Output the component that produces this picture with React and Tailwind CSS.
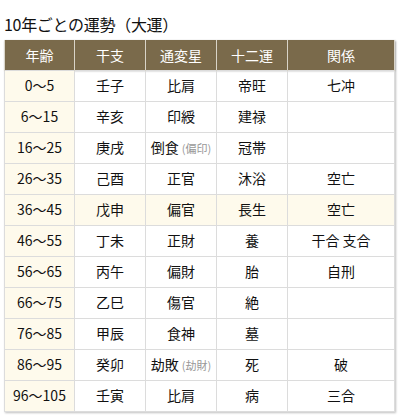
const rows = [
  { age: "0〜5", kanshi: "壬子", star: "比肩", twelve: "帝旺", rel: "七冲" },
  { age: "6〜15", kanshi: "辛亥", star: "印綬", twelve: "建禄", rel: "" },
  { age: "16〜25", kanshi: "庚戌", star: "倒食", sub: "偏印", twelve: "冠帯", rel: "" },
  { age: "26〜35", kanshi: "己酉", star: "正官", twelve: "沐浴", rel: "空亡" },
  { age: "36〜45", kanshi: "戊申", star: "偏官", twelve: "長生", rel: "空亡", current: true },
  { age: "46〜55", kanshi: "丁未", star: "正財", twelve: "養", rel: "干合 支合" },
  { age: "56〜65", kanshi: "丙午", star: "偏財", twelve: "胎", rel: "自刑" },
  { age: "66〜75", kanshi: "乙巳", star: "傷官", twelve: "絶", rel: "" },
  { age: "76〜85", kanshi: "甲辰", star: "食神", twelve: "墓", rel: "" },
  { age: "86〜95", kanshi: "癸卯", star: "劫敗", sub: "劫財", twelve: "死", rel: "破" },
  { age: "96〜105", kanshi: "壬寅", star: "比肩", twelve: "病", rel: "三合" },
];

const headers = ["年齢", "干支", "通変星", "十二運", "関係"];

export default function App() {
  return (
    <div className="bg-white w-[400px] h-[418px] pl-[4px] pt-[14px] text-[#111] font-['Noto_Sans_CJK_JP','Noto_Sans',sans-serif]">
      {/* title */}
      <h2 className="text-[16px] leading-[20px] h-[26px] tracking-[-0.3px]">10年ごとの運勢（大運）</h2>

      <table className="w-[390px] border-collapse table-fixed text-[14px] shadow-[1px_1px_2px_rgba(0,0,0,0.25)]">
        <colgroup>
          <col className="w-[70px]" />
          <col className="w-[71px]" />
          <col className="w-[71px]" />
          <col className="w-[71px]" />
          <col className="w-[107px]" />
        </colgroup>
        <thead>
          <tr className="bg-[#7a6a4b] text-white h-[30px] shadow-[0_1px_2px_rgba(0,0,0,0.3)]">
            {headers.map((h) => (
              <th key={h} className="font-normal border-x border-[#d9d4c8] p-0 leading-[20px]">
                {h}
              </th>
            ))}
          </tr>
        </thead>
        <tbody>
          {rows.map((r) => (
            <tr key={r.age} className={r.current ? "h-[31px] bg-[#fefaec]" : "h-[31px]"}>
              <td className="border border-[#dcdcdc] bg-[#fefaec] text-center p-0">{r.age}</td>
              <td className="border border-[#dcdcdc] text-center p-0">{r.kanshi}</td>
              <td className="border border-[#dcdcdc] text-center p-0 whitespace-nowrap">
                {r.star}
                {r.sub && <span className="ml-[3px] text-[11px] text-[#999]">({r.sub})</span>}
              </td>
              <td className="border border-[#dcdcdc] text-center p-0">{r.twelve}</td>
              <td className="border border-[#dcdcdc] text-center p-0">{r.rel}</td>
            </tr>
          ))}
        </tbody>
      </table>
    </div>
  );
}
